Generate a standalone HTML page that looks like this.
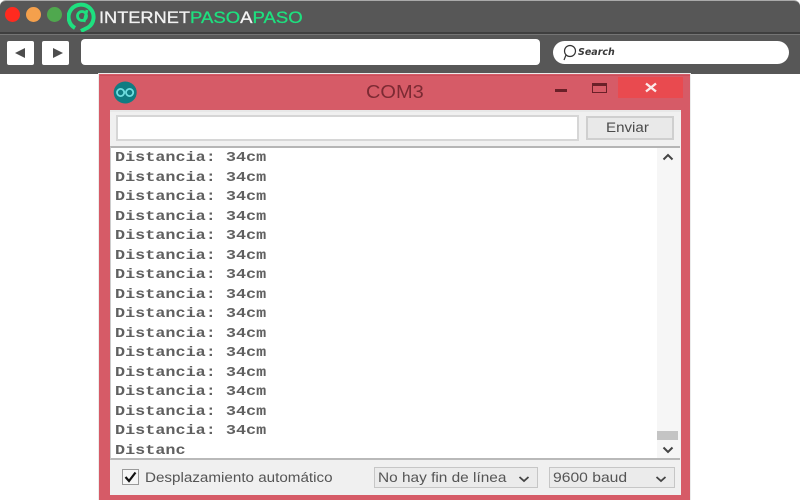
<!DOCTYPE html>
<html><head><meta charset="utf-8"><style>
html,body{margin:0;padding:0;background:#fff}
body{width:800px;height:500px;position:relative;overflow:hidden;font-family:"Liberation Sans",sans-serif;filter:blur(.35px)}
div,svg,span{position:absolute;box-sizing:border-box}
.t{white-space:nowrap;transform-origin:0 0}
.l{left:115px;font:bold 14px/20px "Liberation Mono",monospace;color:#606060;transform:scaleX(1.2);transform-origin:0 0;white-space:pre}
</style></head><body>
<div style="left:0;top:0;width:800px;height:74px;background:#575757;border-radius:6px 6px 0 0;border-top:1px solid #aaa"></div>
<div style="left:0;top:32px;width:800px;height:2px;background:#3f3f3f"></div>
<div style="left:0;top:34px;width:800px;height:1px;background:#757575"></div>
<div style="left:5px;top:7px;width:15px;height:15px;border-radius:50%;background:#ff2a1f"></div>
<div style="left:26px;top:7px;width:15px;height:15px;border-radius:50%;background:#f4a04c"></div>
<div style="left:47px;top:7px;width:15px;height:15px;border-radius:50%;background:#4fa84e"></div>
<svg style="left:67px;top:2px" width="30" height="30" viewBox="0 0 30 30" fill="none" stroke="#1ee07f"><path d="M8 26 A12.500 12.500 0 1 1 21 25.500 L14 29" stroke-width="4"/><circle cx="15" cy="14" r="4.500" stroke-width="2.800"/><path d="M20 8 L17 20" stroke-width="2.800"/></svg>
<div class="t" style="left:99px;top:8px;font-size:17px;line-height:20px;color:#f2f2f2;transform:scaleX(1.07);-webkit-text-stroke:.3px #f2f2f2">INTERNET</div>
<div class="t" style="left:190px;top:8px;font-size:17px;line-height:20px;color:#1ee07f;transform:scaleX(1.09);-webkit-text-stroke:.3px">PASO<span style="position:static;color:#f2f2f2">A</span>PASO</div>
<div style="left:7px;top:41px;width:27px;height:24px;background:#fff;border-radius:2px"></div>
<svg style="left:14px;top:47px" width="13" height="12"><path d="M1 6 L11 1 V11Z" fill="#4d4d4d"/></svg>
<div style="left:42px;top:41px;width:27px;height:24px;background:#fff;border-radius:2px"></div>
<svg style="left:51px;top:47px" width="13" height="12"><path d="M12 6 L2 1 V11Z" fill="#4d4d4d"/></svg>
<div style="left:81px;top:39px;width:459px;height:26px;background:#fff;border-radius:4px"></div>
<div style="left:553px;top:41px;width:236px;height:23px;background:#fff;border-radius:12px"></div>
<svg style="left:561px;top:44px" width="16" height="17" fill="none" stroke="#333" stroke-width="1.200"><circle cx="9" cy="7" r="5.500"/><path d="M5 11 L3 16"/></svg>
<div class="t" style="left:578px;top:47px;font:italic bold 9.500px/12px 'DejaVu Sans',sans-serif;color:#3a3a3a">Search</div>

<div style="left:98px;top:73px;width:593px;height:427px;background:#d65b67;border:1px solid #ececec;border-bottom:0"></div>
<div style="left:100px;top:75px;width:590px;height:1px;background:#c94f5b"></div>
<svg style="left:113px;top:81px" width="25" height="23"><ellipse cx="12.200" cy="11.500" rx="11.500" ry="11" fill="#0f7c82"/><circle cx="7.600" cy="11.500" r="3.600" fill="none" stroke="#6fdde0" stroke-width="1.800"/><circle cx="16.600" cy="11.500" r="3.600" fill="none" stroke="#6fdde0" stroke-width="1.800"/></svg>
<div class="t" style="left:366px;top:82px;font-size:18px;line-height:21px;color:#7c2a33;transform:scaleX(1.11)">COM3</div>
<div style="left:555px;top:89px;width:12px;height:3px;background:#6a2028"></div>
<div style="left:592px;top:83px;width:15px;height:10px;border:1.500px solid #6a2028;border-top-width:3px"></div>
<div style="left:618px;top:77px;width:65px;height:21px;background:#e94a4f"></div>
<svg style="left:644px;top:82px" width="14" height="11"><path d="M2 1.500 L12 9.500 M12 1.500 L2 9.500" stroke="#fbe9e9" stroke-width="2.400"/></svg>

<div style="left:110px;top:110px;width:571px;height:385px;background:#f0f0f0;border-top:2px solid #e8e8e8"></div>
<div style="left:116px;top:115px;width:463px;height:26px;background:#fff;border:2px solid #d6d6d6"></div>
<div style="left:586px;top:116px;width:88px;height:24px;background:#e9e9e9;border:2px solid #cfcfcf"></div>
<div class="t" style="left:606px;top:119px;font-size:13.500px;line-height:17px;color:#4a4a4a;transform:scaleX(1.12)">Enviar</div>

<div style="left:110px;top:146px;width:570px;height:314px;background:#fff;border-top:2px solid #b5b5b5;border-bottom:2px solid #b9b9b9;border-left:1px solid #ccc"></div>
<div style="left:657px;top:148px;width:23px;height:310px;background:#f6f6f6"></div>
<div style="left:657px;top:431px;width:21px;height:9px;background:#c4c4c4"></div>
<svg style="left:662px;top:152px" width="12" height="10" fill="none" stroke="#444" stroke-width="2"><path d="M1.500 7.500 L6 3 L10.500 7.500"/></svg>
<svg style="left:662px;top:445px" width="12" height="10" fill="none" stroke="#444" stroke-width="2"><path d="M1.500 2.500 L6 7 L10.500 2.500"/></svg>

<div class="l" style="top:148px">Distancia: 34cm</div>
<div class="l" style="top:168px">Distancia: 34cm</div>
<div class="l" style="top:187px">Distancia: 34cm</div>
<div class="l" style="top:207px">Distancia: 34cm</div>
<div class="l" style="top:226px">Distancia: 34cm</div>
<div class="l" style="top:246px">Distancia: 34cm</div>
<div class="l" style="top:265px">Distancia: 34cm</div>
<div class="l" style="top:285px">Distancia: 34cm</div>
<div class="l" style="top:304px">Distancia: 34cm</div>
<div class="l" style="top:324px">Distancia: 34cm</div>
<div class="l" style="top:343px">Distancia: 34cm</div>
<div class="l" style="top:363px">Distancia: 34cm</div>
<div class="l" style="top:382px">Distancia: 34cm</div>
<div class="l" style="top:402px">Distancia: 34cm</div>
<div class="l" style="top:421px">Distancia: 34cm</div>
<div class="l" style="top:441px">Distanc</div>

<div style="left:122px;top:469px;width:17px;height:16px;background:#f6f6f6;border:1.500px solid #9a9a9a"></div>
<svg style="left:123px;top:470px" width="15" height="14" fill="none" stroke="#111" stroke-width="2.200"><path d="M2.500 7 L6 11 L12.500 2.500"/></svg>
<div class="t" style="left:145px;top:469px;font-size:13.500px;line-height:17px;color:#555;transform:scaleX(1.126)">Desplazamiento automático</div>
<div style="left:374px;top:467px;width:164px;height:21px;background:#ebebeb;border:1px solid #c6c6c6"></div>
<div class="t" style="left:378px;top:469px;font-size:14px;line-height:17px;color:#555;transform:scaleX(1.1)">No hay fin de línea</div>
<svg style="left:518px;top:474px" width="12" height="10" fill="none" stroke="#444" stroke-width="1.800"><path d="M1.500 3 L6 7 L10.500 3"/></svg>
<div style="left:549px;top:467px;width:126px;height:21px;background:#ebebeb;border:1px solid #c6c6c6"></div>
<div class="t" style="left:553px;top:469px;font-size:14px;line-height:17px;color:#555;transform:scaleX(1.12)">9600 baud</div>
<svg style="left:655px;top:474px" width="12" height="10" fill="none" stroke="#444" stroke-width="1.800"><path d="M1.500 3 L6 7 L10.500 3"/></svg>
</body></html>
